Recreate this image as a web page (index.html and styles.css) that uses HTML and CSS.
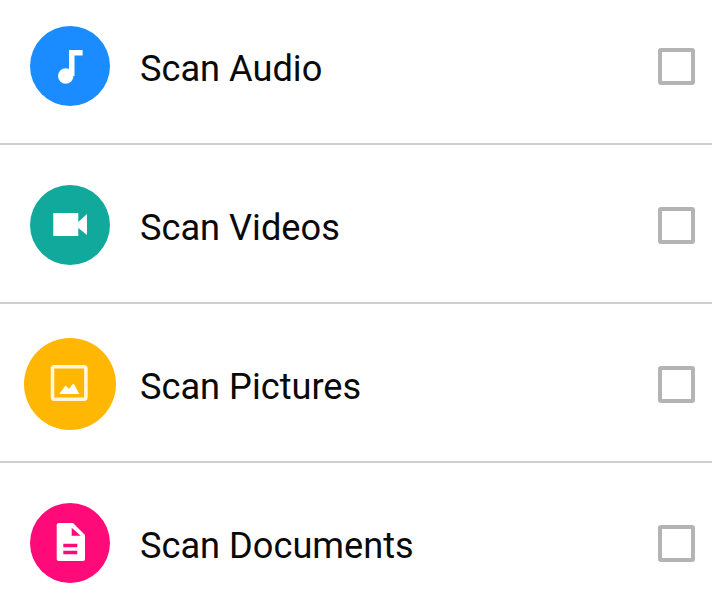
FILE: index.html
```html
<!DOCTYPE html>
<html lang="en">
<head>
<meta charset="utf-8">
<title>Scan options</title>
<link rel="stylesheet" href="styles.css">
</head>
<body>
<ul class="scan-list">
  <li class="scan-row">
    <div class="icon-slot">
      <span class="badge badge-audio">
        <svg class="glyph" viewBox="0 0 80 80" aria-hidden="true">
          <circle cx="35.700" cy="50" r="7.7"/>
          <path d="M39 24h13.600v5.500h-8.100V50H39z"/>
        </svg>
      </span>
    </div>
    <span class="scan-label">Scan Audio</span>
    <span class="check"></span>
  </li>
  <li class="scan-row">
    <div class="icon-slot">
      <span class="badge badge-video">
        <svg class="glyph" viewBox="0 0 80 80" aria-hidden="true">
          <path d="M23.300 28h25v9l8.700-8v21l-8.700-7v8h-25z"/>
        </svg>
      </span>
    </div>
    <span class="scan-label">Scan Videos</span>
    <span class="check"></span>
  </li>
  <li class="scan-row">
    <div class="icon-slot">
      <span class="badge badge-picture">
        <svg class="glyph" viewBox="0 0 92 92" aria-hidden="true">
          <rect class="frame" x="28.500" y="28.800" width="33.400" height="32.400" rx="2"/>
          <path d="M35.300 56l5.500-7.500q1-1.200 2 0l2 2.500 3.500-4.500q1-1.200 2 0l5 9.500z"/>
        </svg>
      </span>
    </div>
    <span class="scan-label">Scan Pictures</span>
    <span class="check"></span>
  </li>
  <li class="scan-row">
    <div class="icon-slot">
      <span class="badge badge-doc">
        <svg class="glyph" viewBox="0 0 80 80" aria-hidden="true">
          <path d="M28.700 20H43l12 12v24a2 2 0 0 1-2 2H28.700a2 2 0 0 1-2-2V22a2 2 0 0 1 2-2z"/>
          <path class="cut" d="M41.700 24.700l9 8h-9zM33.300 40.800h14v3.500h-14zM33.300 47.800h14v3.500h-14z"/>
        </svg>
      </span>
    </div>
    <span class="scan-label">Scan Documents</span>
    <span class="check"></span>
  </li>
</ul>
</body>
</html>
```
FILE: styles.css
```css
html, body {
  margin: 0;
  padding: 0;
  background: #fff;
}

body {
  height: 605px;
  overflow: hidden;
  font-family: Roboto, "Noto Sans", sans-serif;
}

.scan-list {
  list-style: none;
  margin: 0;
  padding: 0;
}

.scan-row {
  display: flex;
  align-items: center;
  padding: 40px 17px 37px 30px;
  border-bottom: 2px solid #cfcfcf;
}

.scan-row:first-child {
  padding-top: 26px;
}

.scan-row:last-child {
  border-bottom: 0;
}

.icon-slot {
  flex: none;
  width: 80px;
  height: 80px;
  display: flex;
  align-items: center;
  justify-content: center;
}

.badge {
  flex: none;
  width: 80px;
  height: 80px;
  border-radius: 50%;
  display: block;
}

.badge-audio { background: #1a8cff; }
.badge-video { background: #11a99b; }
.badge-picture { width: 92px; height: 92px; background: #ffb703; }
.badge-doc { background: #ff0a78; }

.glyph {
  display: block;
  width: 100%;
  height: 100%;
  fill: #fff;
}

.frame {
  fill: none;
  stroke: #fff6dc;
  stroke-width: 3.6;
}

.cut {
  fill: #ff0a78;
}

.scan-label {
  flex: 1;
  margin: 6px 0 0 30px;
  font-size: 36.2px;
  line-height: 44px;
  color: #0a0a0a;
}

.check {
  flex: none;
  width: 29px;
  height: 29px;
  margin-top: 1px;
  border: 4px solid #b4b4b4;
  border-radius: 3px;
}
```
